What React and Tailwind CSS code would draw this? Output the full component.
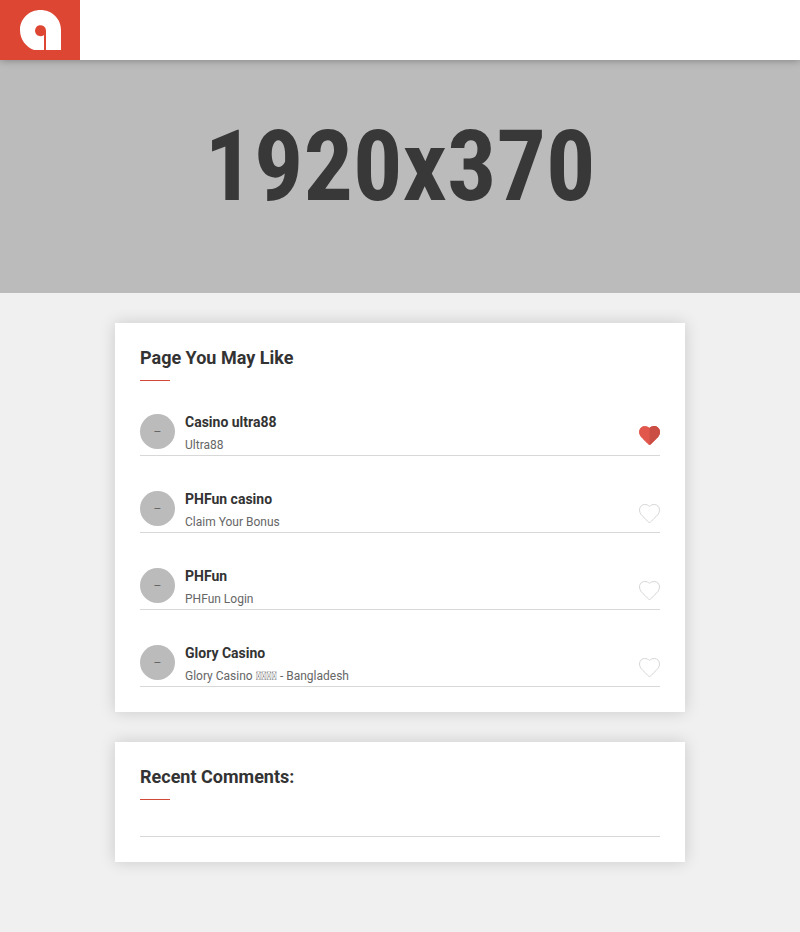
import React from 'react';
import { clsx } from 'clsx';

const pages = [
  { name: 'Casino ultra88', tagline: 'Ultra88', liked: true },
  { name: 'PHFun casino', tagline: 'Claim Your Bonus', liked: false },
  { name: 'PHFun', tagline: 'PHFun Login', liked: false },
  { name: 'Glory Casino', tagline: 'Glory Casino \uE000\uE000\uE000\uE000 - Bangladesh', liked: false },
];

const HEART = 'M10.5 19.5C9.500 19.5 8 17.5 6 15.5C3 12.6 .5 10.6 .5 7C.5 3.7 2.9 1.5 5.600 1.5C7.600 1.5 9.400 2.300 10.5 3.3C11.6 2.3 13.4 1.5 15.4 1.5C18.1 1.5 20.5 3.7 20.5 7C20.5 10.6 18 12.6 15 15.5C13 17.5 11.5 19.5 10.5 19.5Z';
const HEART_RIGHT = 'M10.5 20C11.5 20 13.2 18 15.3 15.8C18.4 12.8 21 10.8 21 7C21 3.4 18.4 1 15.4 1C13.3 1 11.6 1.8 10.5 2.700Z';

function Logo() {
  return (
    <svg viewBox="0 0 80 60" className="w-20 h-15" aria-hidden="true">
      <path
        d="M40.5 10C51.8 10 61 18.6 61 30V50H46V30.5A5.5 5.5 0 1 0 44 34.9V50H34C26 47 20 39.5 20 30C20 18.6 29.2 10 40.5 10Z"
        fill="#fff"
      />
    </svg>
  );
}

function HeartIcon({ filled }) {
  return (
    <svg viewBox="0 0 21 21" className="size-[21px]" aria-hidden="true">
      <path d={HEART} fill={filled ? '#e2574c' : '#fff'} stroke={filled ? '#e2574c' : '#d6d6d6'} />
      {filled && <path d={HEART_RIGHT} fill="#cb4e44" />}
    </svg>
  );
}

function Widget({ title, children }) {
  return (
    <section className="bg-white p-[25px] shadow-[0_0_15px_rgba(0,0,0,0.16)]">
      <h2 className="text-lg leading-5 font-bold text-[#333]">{title}</h2>
      <div className="mt-3 h-px w-[30px] bg-[#d34836]" />
      {children}
    </section>
  );
}

function PageRow({ page }) {
  return (
    <li className="flex items-start border-b border-[#d8d8d8] pb-px">
      <div className="flex size-[35px] shrink-0 items-center justify-center rounded-full bg-[#bbb] text-xs text-[#666]">
        –
      </div>
      <div className="ml-2.5 flex-1">
        <h3 className="text-sm leading-4 font-bold text-[#333]">{page.name}</h3>
        <p className="mt-1.5 text-xs leading-[18px] text-[#666]">{page.tagline}</p>
      </div>
      <button
        type="button"
        aria-label={`Like ${page.name}`}
        aria-pressed={page.liked}
        className={clsx('self-end', page.liked ? 'mb-2' : 'mb-[7px]')}
      >
        <HeartIcon filled={page.liked} />
      </button>
    </li>
  );
}

export default function App() {
  return (
    <div className="min-h-screen bg-[#f0f0f0] font-['Roboto',sans-serif]">
      <header className="relative h-15 bg-white shadow-[0_0_8px_rgba(0,0,0,0.35)]">
        <a href="#" aria-label="Home" className="block h-15 w-20 bg-[#dd4632]">
          <Logo />
        </a>
      </header>

      <div className="flex justify-center bg-[#bbb] pt-[57px] pb-[76px]">
        <span className="font-['Roboto_Condensed','Roboto',sans-serif] text-[98px] leading-[100px] font-bold text-[#383838]">
          1920x370
        </span>
      </div>

      <main className="mx-auto flex max-w-[600px] flex-col gap-[30px] px-[15px] pt-[30px] pb-[70px]">
        <Widget title="Page You May Like">
          <ul className="mt-[33px] flex flex-col gap-[35px]">
            {pages.map((page) => (
              <PageRow key={page.name} page={page} />
            ))}
          </ul>
        </Widget>

        <Widget title="Recent Comments:">
          <hr className="mt-9 border-[#d8d8d8]" />
        </Widget>
      </main>
    </div>
  );
}
